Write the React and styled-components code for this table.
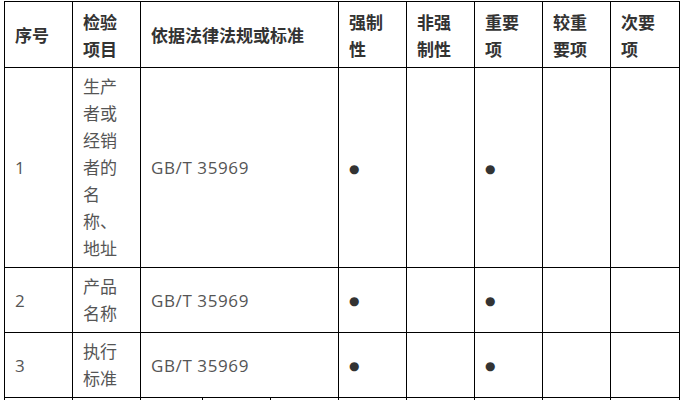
import styled, { createGlobalStyle } from 'styled-components';

const GlobalStyle = createGlobalStyle`
  html, body {
    margin: 0;
    padding: 0;
    overflow: hidden;
    background: #fff;
  }
`

const Page = styled.div`
  padding: 1px 0 0 4px;
  font-family: "Open Sans", "Noto Sans CJK SC", sans-serif;
`

const Table = styled.table`
  border-collapse: collapse;
  table-layout: fixed;
  width: 675px;
`

const Th = styled.th`
  border: 1px solid #000;
  padding: 5.5px 10px;
  font-size: 17px;
  line-height: 27px;
  font-weight: 700;
  color: #333;
  text-align: left;
  vertical-align: middle;
  font-family: "Noto Sans CJK SC", sans-serif;
`

const Td = styled.td`
  border: 1px solid #000;
  padding: 5px 10px;
  font-size: 17px;
  line-height: 27px;
  color: #555;
  text-align: left;
  vertical-align: middle;
  word-break: break-all;
  letter-spacing: ${props => props.ls || 'normal'};
  height: ${props => props.h || 'auto'};
`

const Dot = styled.span`
  font-family: "DejaVu Sans", sans-serif;
  font-size: 12px;
  color: #333;
`

const widths = [68, 68, 62, 68, 68, 68, 68, 68, 68, 69]

const headers = ['强制性', '非强制性', '重要项', '较重要项', '次要项']

const rows = [
  { no: '1', item: '生产者或经销者的名称、地址', std: 'GB/T 35969', marks: [1, 0, 1, 0, 0] },
  { no: '2', item: '产品名称', std: 'GB/T 35969', marks: [1, 0, 1, 0, 0] },
  { no: '3', item: '执行标准', std: 'GB/T 35969', marks: [1, 0, 1, 0, 0] },
]

function App() {
  return (
    <Page>
      <GlobalStyle />
      <Table>
        <colgroup>
          {widths.map((w, i) => <col key={i} style={{ width: w }} />)}
        </colgroup>
        <thead>
          <tr>
            <Th>序号</Th>
            <Th>检验项目</Th>
            <Th colSpan={3}>依据法律法规或标准</Th>
            {headers.map(h => <Th key={h}>{h}</Th>)}
          </tr>
        </thead>
        <tbody>
          {rows.map(r => (
            <tr key={r.no}>
              <Td>{r.no}</Td>
              <Td>{r.item}</Td>
              <Td colSpan={3} ls="0.6px">{r.std}</Td>
              {r.marks.map((m, i) => <Td key={i}>{m ? <Dot>●</Dot> : null}</Td>)}
            </tr>
          ))}
          <tr>
            {widths.map((w, i) => <Td key={i} h="54px"></Td>)}
          </tr>
        </tbody>
      </Table>
    </Page>
  )
}

export default App
